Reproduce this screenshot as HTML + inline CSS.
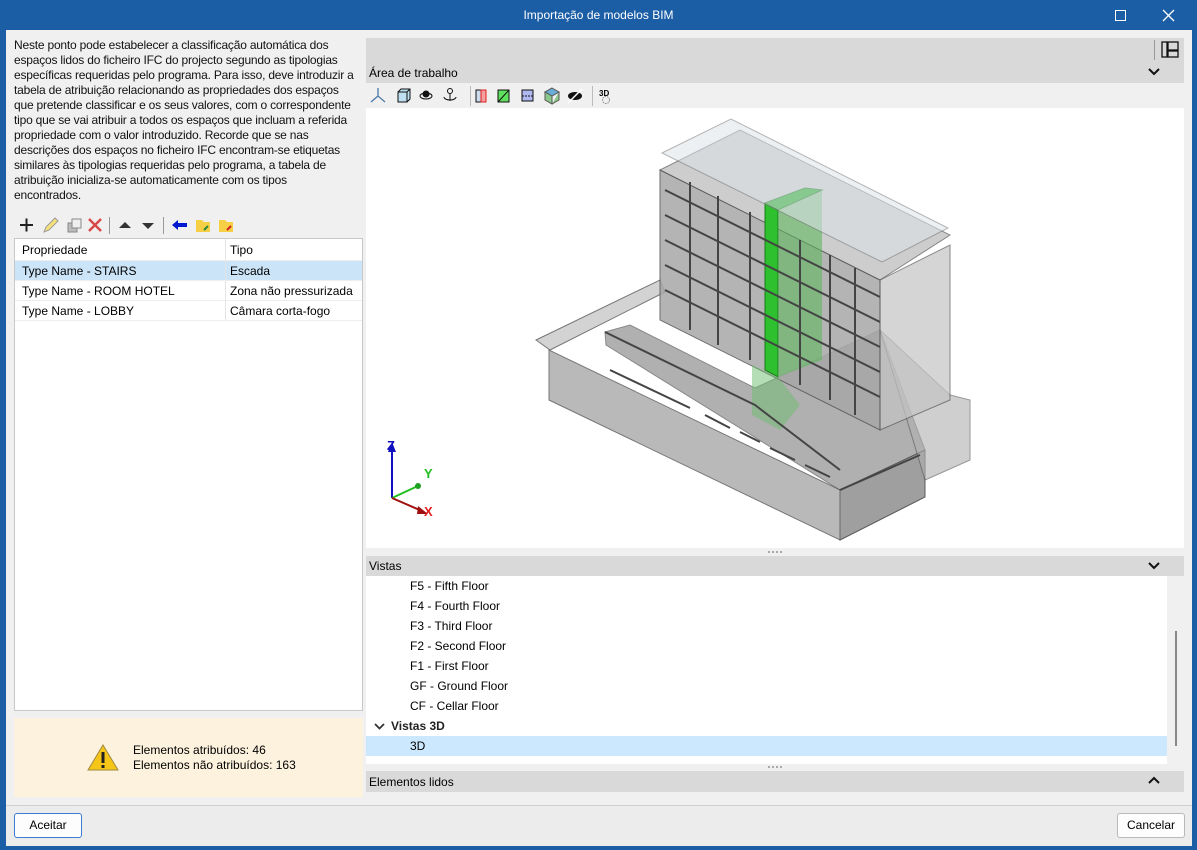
<!DOCTYPE html>
<html><head><meta charset="utf-8">
<style>
*{box-sizing:border-box;margin:0;padding:0}
body{width:1197px;height:850px;overflow:hidden;background:#1b5ea6;font-family:"Liberation Sans",sans-serif;font-size:12px;color:#000;position:relative}
.abs{position:absolute}
.title{left:0;top:0;width:1197px;height:30px;color:#fff;text-align:center;line-height:30px;font-size:12px}
.win{left:6px;top:30px;width:1186px;height:816px;background:#f0f0f0}
.desc{left:14px;top:38px;width:352px;line-height:15px;font-size:12px;color:#111;letter-spacing:-0.2px;white-space:nowrap}
.tbl{left:14px;top:238px;width:349px;height:473px;background:#fff;border:1px solid #c8c8c8}
.row{position:absolute;left:0;width:347px;height:20px;line-height:20px;border-bottom:1px solid #eee}
.row span{position:absolute;top:0}
.c1{left:7px}.c2{left:215px}
.sep{position:absolute;left:210px;top:0;width:1px;height:100%;background:#e4e4e4}
.warn{left:14px;top:718px;width:349px;height:79px;background:#fdf2dd}
.hdr{background:#d9d9d9}
.btn{height:25px;background:#fdfdfd;border:1px solid #b9b9b9;border-radius:3px;text-align:center;line-height:23px;font-size:12px}
.vl{position:absolute;left:44px;font-size:12px;line-height:20px}
</style></head><body>
<div class="abs title">Importação de modelos BIM</div>
<div class="abs" style="left:1115px;top:10px;width:11px;height:11px;border:1px solid #fff"></div>
<svg class="abs" style="left:1162px;top:9px" width="13" height="13"><path d="M1 1L12 12M12 1L1 12" stroke="#fff" stroke-width="1.3"/></svg>
<div class="abs win"></div>
<div class="abs desc">Neste ponto pode estabelecer a classificação automática dos<br>espaços lidos do ficheiro IFC do projecto segundo as tipologias<br>específicas requeridas pelo programa. Para isso, deve introduzir a<br>tabela de atribuição relacionando as propriedades dos espaços<br>que pretende classificar e os seus valores, com o correspondente<br>tipo que se vai atribuir a todos os espaços que incluam a referida<br>propriedade com o valor introduzido. Recorde que se nas<br>descrições dos espaços no ficheiro IFC encontram-se etiquetas<br>similares às tipologias requeridas pelo programa, a tabela de<br>atribuição inicializa-se automaticamente com os tipos<br>encontrados.</div>
<svg class="abs" style="left:14px;top:214px" width="230" height="22">
<path d="M6 11H19M12.5 4.5V17.5" stroke="#222" stroke-width="2"/>
<path d="M30 18L32 13L41 4L44 7L35 16Z" fill="#f6e07a" stroke="#999" stroke-width="1"/>
<rect x="54" y="9" width="9" height="9" fill="#bbb" stroke="#888"/><rect x="58" y="5" width="9" height="9" fill="#eee" stroke="#888"/>
<path d="M75 5L87 17M87 5L75 17" stroke="#d94848" stroke-width="2.5"/>
<rect x="95" y="3" width="1" height="17" fill="#999"/>
<path d="M105 14L111 8L117 14Z" fill="#333"/><path d="M128 9L140 9L134 15Z" fill="#333"/>
<rect x="149" y="3" width="1" height="17" fill="#999"/>
<path d="M158 11L164 6V9H173V13H164V16Z" fill="#0018d0"/>
<path d="M182 6H188L190 8H196V18H182Z" fill="#f7cf45"/><path d="M190 16L194 12" stroke="#2a8a3a" stroke-width="2"/>
<path d="M205 6H211L213 8H219V18H205Z" fill="#f7cf45"/><path d="M213 16L217 12" stroke="#d02020" stroke-width="2"/>
</svg>
<div class="abs tbl">
 <div class="row" style="top:0;height:22px;line-height:22px;background:#fff"><span class="c1">Propriedade</span><span class="c2">Tipo</span><div class="sep"></div></div>
 <div class="row" style="top:22px;background:#cce4f7"><span class="c1">Type Name - STAIRS</span><span class="c2">Escada</span><div class="sep"></div></div>
 <div class="row" style="top:42px"><span class="c1">Type Name - ROOM HOTEL</span><span class="c2">Zona não pressurizada</span><div class="sep"></div></div>
 <div class="row" style="top:62px"><span class="c1">Type Name - LOBBY</span><span class="c2">Câmara corta-fogo</span><div class="sep"></div></div>
</div>
<div class="abs warn">
 <svg class="abs" style="left:73px;top:25px" width="32" height="28"><path d="M16 2L31 27H1Z" fill="#f5c518" stroke="#a08a40"/><rect x="14.5" y="9" width="3" height="11" fill="#222"/><rect x="14.5" y="22" width="3" height="3" fill="#222"/></svg>
 <div class="abs" style="left:119px;top:25px;line-height:15px">Elementos atribuídos: 46<br>Elementos não atribuídos: 163</div>
</div>
<div class="abs hdr" style="left:366px;top:38px;width:818px;height:45px"></div>
<div class="abs" style="left:1154px;top:40px;width:1px;height:20px;background:#999"></div>
<svg class="abs" style="left:1161px;top:41px" width="20" height="18"><rect x="1" y="1" width="5" height="15" fill="none" stroke="#111" stroke-width="1.3"/><rect x="7" y="1" width="10" height="8" fill="none" stroke="#111" stroke-width="1.3"/><rect x="7" y="10" width="10" height="6" fill="none" stroke="#111" stroke-width="1.3"/></svg>
<svg class="abs" style="left:1148px;top:67px" width="12" height="10"><path d="M1 2L6 7L11 2" stroke="#111" stroke-width="2" fill="none"/></svg>
<div class="abs" style="left:369px;top:66px">Área de trabalho</div>
<svg class="abs" style="left:366px;top:84px" width="260" height="24">
<path d="M12 12V4M12 12L5 18M12 12L19 18" stroke="#4c78a8" stroke-width="1.3" fill="none"/>
<path d="M32 8H41V18H32ZM32 8L35 5H44V15L41 18M41 8L44 5" fill="#bfe0f0" stroke="#111"/>
<ellipse cx="60" cy="12" rx="6" ry="3" fill="none" stroke="#111"/><circle cx="60" cy="10" r="3.5" fill="#111"/>
<circle cx="84" cy="7" r="2.5" fill="none" stroke="#111"/><path d="M84 9V17M78 13A6 3 0 1 0 90 13" stroke="#111" fill="none"/>
<rect x="104" y="2" width="1" height="20" fill="#bbb"/>
<rect x="110" y="6" width="5" height="12" fill="#cde" stroke="#111"/><rect x="115" y="6" width="5" height="12" fill="#f4a0a0" stroke="#e02020"/>
<rect x="132" y="6" width="11" height="12" fill="#5ee05e" stroke="#111"/><path d="M132 18L143 6" stroke="#111"/>
<rect x="156" y="6" width="11" height="11" fill="#b0b8f0" stroke="#111"/><path d="M156 12H167" stroke="#111" stroke-dasharray="2 1"/>
<path d="M186 4L193 8L186 12L179 8Z" fill="#6aaed8" stroke="#555"/><path d="M179 8V16L186 20V12ZM193 8V16L186 20" fill="#8bc88b" stroke="#555"/>
<ellipse cx="209" cy="12" rx="7" ry="4" fill="#111"/><path d="M202 19L216 5" stroke="#fff" stroke-width="1.5"/>
<rect x="226" y="2" width="1" height="20" fill="#bbb"/>
<text x="233" y="12" font-size="8" font-weight="bold" font-family="Liberation Sans">3D</text><circle cx="240" cy="16" r="3.5" fill="none" stroke="#888" stroke-dasharray="1.5 1"/>
</svg>
<div class="abs" style="left:366px;top:108px;width:818px;height:440px;background:#fff"></div>
<svg class="abs" style="left:366px;top:108px" width="818" height="440">
<g transform="translate(-366,-108)" stroke="#555" stroke-width="1">
<path d="M536 340L660 280L665 292L550 350Z" fill="#c9c9c9" opacity="0.8"/>
<path d="M549 350L549 400L840 540L925 497L925 450L840 490Z" fill="#a8a8a8" opacity="0.8"/>
<path d="M840 490L840 540L925 497L925 450Z" fill="#999" opacity="0.8"/>
<path d="M606 345L605 332L630 325L755 388L880 330L925 450L840 490Z" fill="#8f8f8f" opacity="0.7"/>
<path d="M880 330L950 395L970 400L970 460L925 480Z" fill="#b0b0b0" opacity="0.6"/>
<path d="M660 170L880 280L880 430L660 320Z" fill="#a7a7a7" opacity="0.85"/>
<path d="M880 280L950 245L950 400L880 430Z" fill="#c4c4c4" opacity="0.7"/>
<path d="M660 170L740 130L950 235L880 280Z" fill="#b8b8b8" opacity="0.7"/>
<path d="M765 203L765 370L778 377L778 210Z" fill="#2fc02f" stroke="#1a7a1a"/>
<path d="M778 210L822 190L822 360L778 377Z" fill="#5fb85f" opacity="0.6" stroke="none"/>
<path d="M765 203L805 188L822 190L778 210Z" fill="#22a822" stroke="#1a7a1a"/>
<path d="M752 365L778 377L800 405L780 430L752 415Z" fill="#6ebd6e" opacity="0.5" stroke="none"/>
<path d="M662 153L731 119L948 228L882 262Z" fill="#dde4ea" opacity="0.55" stroke="#777"/>
</g>
<g stroke="#444" stroke-width="2" fill="none" transform="translate(-366,-108)">
<path d="M665 190L880 297M665 215L880 322M665 240L880 347M665 265L880 372M665 290L880 397"/>
<path d="M690 182V330M718 196V345M750 212V360M800 240V385M830 255V400M855 268V415"/>
<path d="M605 332L755 405L840 470M840 490L920 455"/>
<path d="M610 370L690 408M705 415L730 428M740 432L760 442M770 448L795 460M805 465L830 477"/>
</g>
<g transform="translate(26,330)">
<path d="M0 60V10" stroke="#1010c0" stroke-width="2"/><path d="M-4 14L0 4L4 14Z" fill="#1010c0"/>
<path d="M0 60L28 47" stroke="#20c020" stroke-width="2"/><circle cx="26" cy="48" r="3" fill="#20a020"/>
<path d="M0 60L30 73" stroke="#a01010" stroke-width="2"/><path d="M26 68L36 76L25 76Z" fill="#a01010"/>
<text x="-5" y="12" fill="#1010c0" font-size="13" font-weight="bold" font-family="Liberation Sans">Z</text>
<text x="32" y="40" fill="#20c020" font-size="13" font-weight="bold" font-family="Liberation Sans">Y</text>
<text x="32" y="78" fill="#e02020" font-size="13" font-weight="bold" font-family="Liberation Sans">X</text>
</g>
</svg>
<div class="abs" style="left:768px;top:551px;width:14px;height:2px;border-top:2px dotted #aaa"></div>
<div class="abs hdr" style="left:366px;top:556px;width:818px;height:20px"></div>
<div class="abs" style="left:369px;top:559px">Vistas</div>
<svg class="abs" style="left:1148px;top:561px" width="12" height="10"><path d="M1 2L6 7L11 2" stroke="#111" stroke-width="2" fill="none"/></svg>
<div class="abs" style="left:366px;top:576px;width:801px;height:188px;background:#fff">
 <div class="vl" style="top:0">F5 - Fifth Floor</div>
 <div class="vl" style="top:20px">F4 - Fourth Floor</div>
 <div class="vl" style="top:40px">F3 - Third Floor</div>
 <div class="vl" style="top:60px">F2 - Second Floor</div>
 <div class="vl" style="top:80px">F1 - First Floor</div>
 <div class="vl" style="top:100px">GF - Ground Floor</div>
 <div class="vl" style="top:120px">CF - Cellar Floor</div>
 <svg class="abs" style="left:8px;top:146px" width="12" height="9"><path d="M1 2L5.5 6.5L10 2" stroke="#333" stroke-width="1.8" fill="none"/></svg>
 <div class="vl" style="top:140px;left:25px;font-weight:bold;color:#222">Vistas 3D</div>
 <div class="abs" style="left:0;top:160px;width:801px;height:20px;background:#cce8ff"></div>
 <div class="vl" style="top:160px">3D</div>
</div>
<div class="abs" style="left:1175px;top:631px;width:2px;height:115px;background:#888"></div>
<div class="abs" style="left:768px;top:766px;width:14px;height:2px;border-top:2px dotted #aaa"></div>
<div class="abs hdr" style="left:366px;top:771px;width:818px;height:21px"></div>
<div class="abs" style="left:369px;top:775px">Elementos lidos</div>
<svg class="abs" style="left:1148px;top:776px" width="12" height="10"><path d="M1 7L6 2L11 7" stroke="#111" stroke-width="2" fill="none"/></svg>
<div class="abs" style="left:6px;top:805px;width:1186px;height:41px;background:#ececec;border-top:1px solid #d0d0d0"></div>
<div class="abs btn" style="left:14px;top:813px;width:68px;border-color:#3b7bd0">Aceitar</div>
<div class="abs btn" style="left:1117px;top:813px;width:68px">Cancelar</div>
</body></html>
